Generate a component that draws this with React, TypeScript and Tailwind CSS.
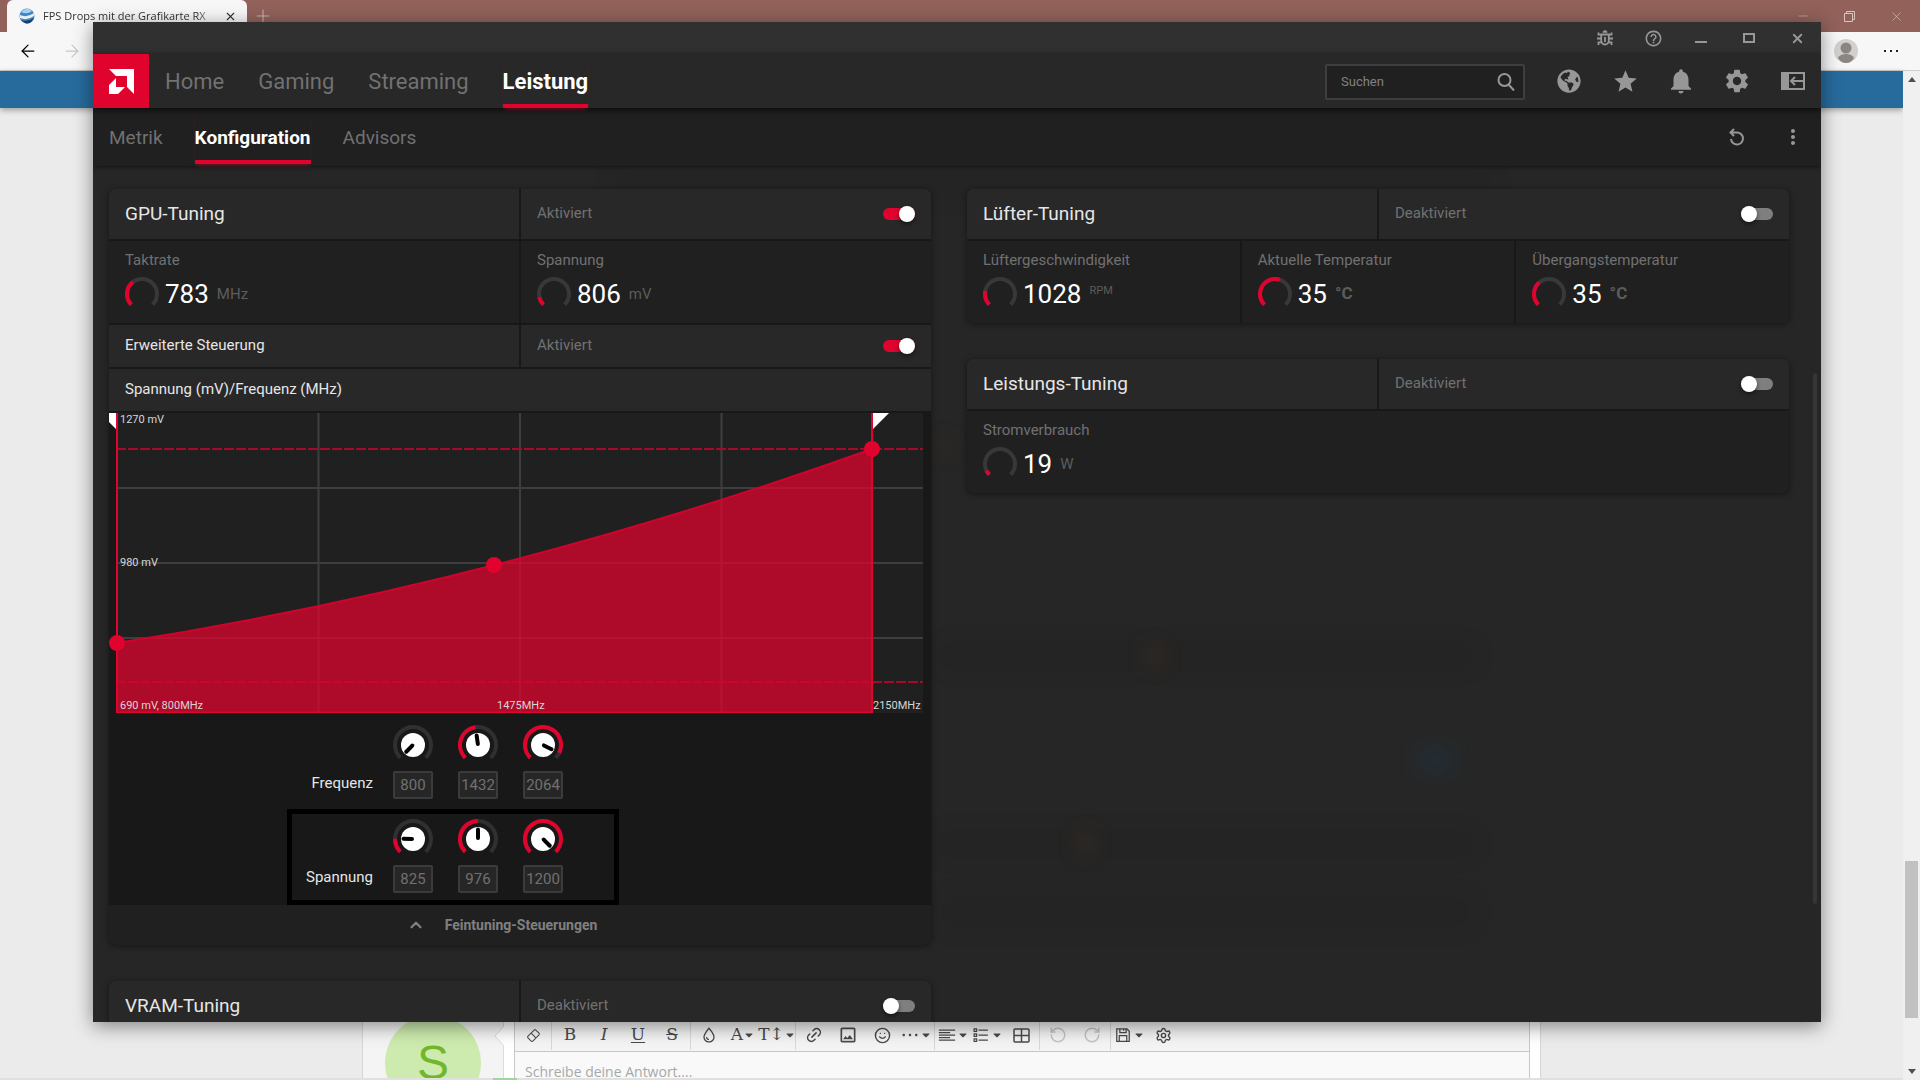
import type { ReactNode } from "react";
import { ArrowLeft, ArrowRight, ChevronUp, Link2, Minus, Plus, RotateCcw, RotateCw, Settings, Smile, X } from "lucide-react";
import { FaCaretDown, FaGlobeAmericas } from "react-icons/fa";
import {
  LiaAlignLeftSolid,
  LiaEllipsisHSolid,
  LiaEraserSolid,
  LiaListUlSolid,
  LiaSaveSolid,
  LiaTintSolid,
} from "react-icons/lia";
import { MdHelpOutline, MdMoreVert, MdNotifications, MdOutlineImage, MdSettings, MdStar } from "react-icons/md";

const RED = "#e0032d";

// 270° arc, starts bottom left. value is 0..1
function arc(cx: number, cy: number, r: number, value: number) {
  const point = (deg: number) => {
    const rad = (deg * Math.PI) / 180;
    return `${cx + r * Math.sin(rad)} ${cy - r * Math.cos(rad)}`;
  };
  const end = -135 + 270 * value;
  return `M${point(-135)}A${r} ${r} 0 ${value * 270 > 180 ? 1 : 0} 1 ${point(end)}`;
}

function Gauge({ value }: { value: number }) {
  return (
    <svg width="34" height="34" viewBox="0 0 34 34" fill="none" strokeWidth="4" aria-hidden="true">
      <path d={arc(17, 17, 15, 1)} stroke="#383838" />
      <path d={arc(17, 17, 15, value)} stroke={RED} />
    </svg>
  );
}

function Knob({ value }: { value: number }) {
  return (
    <svg width="40" height="40" viewBox="0 0 40 40" fill="none" aria-hidden="true">
      <path d={arc(20, 20, 18, 1)} stroke="#303030" strokeWidth="4" />
      {value > 0 && <path d={arc(20, 20, 18, value)} stroke={RED} strokeWidth="4" />}
      <circle cx="20" cy="20" r="12" fill="#fff" />
      <path
        d="M20 19V10.500"
        stroke="#000"
        strokeWidth="4"
        strokeLinecap="round"
        transform={`rotate(${-135 + 270 * value} 20 20)`}
      />
    </svg>
  );
}

function Toggle({ id, on = false }: { id: string; on?: boolean }) {
  return (
    <input
      id={id}
      type="checkbox"
      defaultChecked={on}
      className="relative h-3 w-8 shrink-0 appearance-none rounded-full bg-[#7f7f7f] before:absolute before:-top-0.5 before:left-0 before:size-4 before:rounded-full before:bg-white before:shadow-[0_2px_4px_rgba(0,0,0,0.5)] checked:bg-[#e0032d] checked:before:left-4"
    />
  );
}

type HeaderProps = { id: string; title: string; on?: boolean; small?: boolean };

function TuningHeader({ id, title, on = false, small = false }: HeaderProps) {
  return (
    <div className={`grid grid-cols-2 gap-0.5 ${small ? "h-[42px]" : "h-[50px]"}`}>
      <div className="flex items-center bg-[#282828] px-4">
        {small ? (
          <h3 className="pb-0.5 text-[15px] text-[#e6e6e6]">{title}</h3>
        ) : (
          <h2 className="text-[19px] text-[#e6e6e6]">{title}</h2>
        )}
      </div>
      <div className="flex items-center justify-between bg-[#282828] px-4">
        <label htmlFor={id} className="pb-0.5 text-[15px] text-[#717171]">
          {on ? "Aktiviert" : "Deaktiviert"}
        </label>
        <Toggle id={id} on={on} />
      </div>
    </div>
  );
}

type MetricProps = { label: string; value: string; unit: string; level: number };

function Metric({ label, value, unit, level }: MetricProps) {
  return (
    <div className="h-[82px] bg-[#202020] px-4 pt-[7px]">
      <div className="text-[15px] leading-6 text-[#717171]">{label}</div>
      <div className="mt-[5px] flex items-center">
        <Gauge value={level} />
        <span className="ml-1.5 text-[26px] leading-8 text-white">{value}</span>
        {unit === "RPM" && <span className="mb-1.5 ml-2 text-[11px] text-[#5c5c5c]">RPM</span>}
        {unit === "°C" && <span className="ml-2 text-[17px] font-bold text-[#5c5c5c]">°C</span>}
        {unit !== "RPM" && unit !== "°C" && <span className="ml-2 text-[15px] text-[#5c5c5c]">{unit}</span>}
      </div>
    </div>
  );
}

function Card({ children }: { children: ReactNode }) {
  return (
    <section className="flex flex-col gap-0.5 overflow-hidden rounded-md bg-[#181818] shadow-[0_1px_6px_rgba(0,0,0,0.45)]">
      {children}
    </section>
  );
}

function CurveChart() {
  const curve = "M8 230Q385.500 171 763 36";
  return (
    <svg viewBox="0 0 822 300" className="block w-full" role="img" aria-label="Spannung/Frequenz">
      <rect x="7" width="807" height="300" fill="#202020" />
      <g stroke="#3e3e3e" strokeWidth="2">
        <path d="M209.500 0V300M411 0V300M612.500 0V300M8 75H814M8 150H814M8 225H814" />
      </g>
      <g stroke="#a8082a" strokeWidth="2" strokeDasharray="10 2">
        <path d="M7 36H814M7 269H814" />
      </g>
      <path d={`${curve}V300H8Z`} fill={RED} fillOpacity="0.740" />
      <path d="M7 269H763" stroke="#cf042d" strokeWidth="2" strokeDasharray="10 2" />
      <path d={curve} fill="none" stroke="#d0032d" strokeWidth="2" />
      <path d="M8 0V299.500H763V0" fill="none" stroke={RED} strokeWidth="2" />
      <path d="M0 0H7V16L0 9ZM764 0H780L764 16Z" fill="#fff" />
      <circle cx="8" cy="230" r="8" fill={RED} />
      <circle cx="385" cy="152" r="8" fill={RED} />
      <circle cx="763" cy="36" r="8" fill={RED} />
      <g fill="#d6d6d6" fontSize="11">
        <text x="11" y="10">1270 mV</text>
        <text x="11" y="153">980 mV</text>
        <text x="11" y="296">690 mV, 800MHz</text>
        <text x="388" y="296">1475MHz</text>
        <text x="764" y="296">2150MHz</text>
      </g>
    </svg>
  );
}

type KnobRowProps = { label: string; framed?: boolean; points: { value: string; level: number }[] };

function KnobRow({ label, framed = false, points }: KnobRowProps) {
  return (
    <div
      className={`ml-[178px] flex h-24 w-[332px] items-end gap-5 border-[5px] ${
        framed ? "border-black pb-[7px]" : "border-transparent pb-[5px]"
      }`}
    >
      <span className="w-[81px] pb-1 text-right text-[15px] leading-6 text-[#e6e6e6]">{label}</span>
      <div className="flex gap-[25px]">
        {points.map((p) => (
          <div key={p.value} className="flex flex-col gap-1.5">
            <Knob value={p.level} />
            <input
              aria-label={`${label} ${p.value}`}
              defaultValue={p.value}
              className="h-7 w-10 rounded-xs border-2 border-[#3b3b3b] bg-[#262626] text-center text-[15px] text-[#717171]"
            />
          </div>
        ))}
      </div>
    </div>
  );
}

function BugIcon() {
  return (
    <svg width="16" height="16" viewBox="0 0 16 16" fill="none" stroke="currentColor" strokeWidth="1.800" aria-hidden="true">
      <path d="M5.500 2.800a2.500 2.500 0 0 1 5 0z" fill="currentColor" stroke="none" />
      <path d="M4.200 4.500h7.600v6a3.800 4 0 0 1-7.600 0zM8 7v5M0 8.500h4M12 8.500h4M1.500 2.500v2.200h3M14.500 2.500v2.200h-3M1.500 15v-2.700h3M14.500 15v-2.700h-3" />
    </svg>
  );
}

function SearchIcon() {
  return (
    <svg width="18" height="18" viewBox="0 0 18 18" fill="none" stroke="currentColor" strokeWidth="2" aria-hidden="true">
      <circle cx="7.500" cy="7" r="6" />
      <path d="M11.500 11.500L17 17.500" />
    </svg>
  );
}

function PanelIcon() {
  return (
    <svg width="24" height="18" viewBox="0 0 24 18" fill="none" stroke="currentColor" strokeWidth="2" aria-hidden="true">
      <path d="M1 1h22v16H1z" />
      <path d="M0 0h8v18H0z" fill="currentColor" stroke="none" />
      <path d="M23 9H10M14 5l-4 4 4 4" />
    </svg>
  );
}

function ResetIcon() {
  return (
    <svg width="16" height="18" viewBox="0 0 16 18" fill="none" stroke="currentColor" strokeWidth="2" aria-hidden="true">
      <path d="M5 1L1.500 4.500 5 8M1.500 4.500H8a6 6 0 1 1-6 6.500" />
    </svg>
  );
}

function RestoreIcon() {
  return (
    <svg width="11" height="11" viewBox="0 0 11 11" fill="none" stroke="currentColor" aria-hidden="true">
      <path d="M0.500 2.500h8v8h-8zM2.500 2.500v-2h8v8h-2" />
    </svg>
  );
}

function TableIcon() {
  return (
    <svg width="17" height="15" viewBox="0 0 17 15" fill="none" stroke="currentColor" strokeWidth="1.500" aria-hidden="true">
      <rect x="1" y="1" width="15" height="13" rx="1" />
      <path d="M8.500 1V14M1 7.500H16" />
    </svg>
  );
}

const mainTabs = ["Home", "Gaming", "Streaming", "Leistung"];
const subTabs = ["Metrik", "Konfiguration", "Advisors"];

const titleActions = [
  { label: "Fehler melden", icon: <BugIcon /> },
  { label: "Hilfe", icon: <MdHelpOutline size={19} /> },
  { label: "Minimieren", icon: <span className="mt-2 h-0.5 w-3 bg-current" /> },
  { label: "Maximieren", icon: <span className="h-2.5 w-3 border-2 border-current" /> },
  { label: "Schließen", icon: <X size={15} strokeWidth={3} /> },
];

const navActions = [
  { label: "Web", icon: <FaGlobeAmericas size={24} /> },
  { label: "Favoriten", icon: <MdStar size={27} /> },
  { label: "Benachrichtigungen", icon: <MdNotifications size={30} /> },
  { label: "Einstellungen", icon: <MdSettings size={28} /> },
  { label: "Seitenleiste", icon: <PanelIcon /> },
];

const ghosts = [
  "left-[520px] top-[10px] h-4 w-[880px] bg-black/10",
  "left-[842px] top-[482px] h-4 w-[540px] bg-black/10",
  "left-[842px] top-[670px] h-4 w-[540px] bg-black/10",
  "left-[842px] top-[730px] h-8 w-[540px] bg-black/5",
  "left-[1052px] top-[480px] size-5 bg-amber-600/10",
  "left-[982px] top-[667px] size-5 bg-amber-600/10",
  "left-[842px] top-[270px] size-5 bg-amber-600/5",
  "left-[1326px] top-[584px] h-5 w-8 bg-sky-600/15",
];

function RadeonWindow() {
  return (
    <div className="absolute top-[22px] right-[99px] bottom-[58px] left-[93px] flex flex-col overflow-hidden bg-[#262626] font-[Roboto,sans-serif] text-[#979797]">
      <header className="flex h-8 shrink-0 justify-end bg-[#303030]">
        {titleActions.map((a) => (
          <button key={a.label} aria-label={a.label} className="flex w-12 items-center justify-center">
            {a.icon}
          </button>
        ))}
      </header>

      <nav className="z-10 flex h-[54px] shrink-0 items-stretch bg-[#282828] shadow-[0_2px_6px_rgba(0,0,0,0.7)]">
        <a href="#home" aria-label="AMD" className="flex w-14 items-center justify-center bg-[#e0032d]">
          <svg width="25" height="25" viewBox="0 0 25 25" fill="#fff" aria-hidden="true">
            <path d="M0 0H25V25L18 18V7H7ZM7 9V18H16L9 25H0V16Z" />
          </svg>
        </a>
        <div className="ml-4 flex gap-[34px]">
          {mainTabs.map((tab) => (
            <a
              key={tab}
              href={`#${tab}`}
              className={
                tab === "Leistung"
                  ? "border-b-4 border-[#e0032d] pt-1.5 text-[22px] leading-[44px] font-bold text-white shadow-[0_3px_4px_-2px_rgba(224,3,45,0.5)]"
                  : "pt-1.5 text-[22px] leading-[44px] text-[#717171]"
              }
            >
              {tab}
            </a>
          ))}
        </div>
        <div className="my-2.5 mr-4 ml-auto flex h-9 w-[200px] items-center rounded-xs border-2 border-[#3e3e3e] bg-[#202020] pr-2 pl-3.5 max-xl:w-32">
          <input
            aria-label="Suchen"
            placeholder="Suchen"
            className="min-w-0 flex-1 bg-transparent text-[13px] outline-none placeholder:text-[#808080]"
          />
          <SearchIcon />
        </div>
        {navActions.map((a) => (
          <button key={a.label} aria-label={a.label} className="flex w-14 items-center justify-center">
            {a.icon}
          </button>
        ))}
      </nav>

      <nav className="flex h-[58px] shrink-0 items-stretch bg-[#202020] shadow-[0_1px_4px_rgba(0,0,0,0.5)]">
        <div className="mb-0.5 ml-4 flex gap-8">
          {subTabs.map((tab) => (
            <a
              key={tab}
              href={`#${tab}`}
              className={
                tab === "Konfiguration"
                  ? "border-b-4 border-[#e0032d] pt-1.5 text-[19px] leading-[48px] font-bold text-white shadow-[0_3px_4px_-2px_rgba(224,3,45,0.5)]"
                  : "pt-1.5 text-[19px] leading-[48px] text-[#717171]"
              }
            >
              {tab}
            </a>
          ))}
        </div>
        <button aria-label="Zurücksetzen" className="ml-auto flex w-14 items-center justify-center">
          <ResetIcon />
        </button>
        <button aria-label="Mehr" className="flex w-14 items-center justify-center">
          <MdMoreVert size={24} />
        </button>
      </nav>

      <main className="relative min-h-0 flex-1 overflow-hidden pt-[23px] pr-8 pl-4">
        {ghosts.map((g) => (
          <div key={g} className={`absolute rounded-full blur-md ${g}`} />
        ))}
        <div className="relative grid grid-cols-2 items-start gap-9">
          <div className="flex flex-col gap-9">
            <Card>
              <TuningHeader id="gpu" title="GPU-Tuning" on />
              <div className="grid grid-cols-2 gap-0.5">
                <Metric label="Taktrate" value="783" unit="MHz" level={0.36} />
                <Metric label="Spannung" value="806" unit="mV" level={0.12} />
              </div>
              <TuningHeader id="advanced" title="Erweiterte Steuerung" on small />
              <h3 className="bg-[#282828] px-4 pb-0.5 text-[15px] leading-10 text-[#e6e6e6]">
                Spannung (mV)/Frequenz (MHz)
              </h3>
              <div>
                <CurveChart />
                <KnobRow
                  label="Frequenz"
                  points={[
                    { value: "800", level: 0 },
                    { value: "1432", level: 0.47 },
                    { value: "2064", level: 0.93 },
                  ]}
                />
                <KnobRow
                  label="Spannung"
                  framed
                  points={[
                    { value: "825", level: 0.17 },
                    { value: "976", level: 0.5 },
                    { value: "1200", level: 1 },
                  ]}
                />
                <button className="flex h-10 w-full items-center justify-center gap-5 bg-[#202020] pr-9 text-[14px] font-bold text-[#808080]">
                  <ChevronUp size={18} strokeWidth={3} />
                  Feintuning-Steuerungen
                </button>
              </div>
            </Card>
            <Card>
              <TuningHeader id="vram" title="VRAM-Tuning" />
            </Card>
          </div>

          <div className="flex flex-col gap-9">
            <Card>
              <TuningHeader id="fan" title="Lüfter-Tuning" />
              <div className="grid grid-cols-3 gap-0.5">
                <Metric label="Lüftergeschwindigkeit" value="1028" unit="RPM" level={0.21} />
                <Metric label="Aktuelle Temperatur" value="35" unit="°C" level={0.57} />
                <Metric label="Übergangstemperatur" value="35" unit="°C" level={0.35} />
              </div>
            </Card>
            <Card>
              <TuningHeader id="power" title="Leistungs-Tuning" />
              <Metric label="Stromverbrauch" value="19" unit="W" level={0.07} />
            </Card>
          </div>
        </div>
        {/* Scroll thumb */}
        <div className="absolute top-[207px] right-1 h-[531px] w-1 rounded-full bg-[#363636]" />
      </main>
    </div>
  );
}

type Tool = { label: string; icon: ReactNode; caret?: boolean; muted?: boolean };

const toolGroups: Tool[][] = [
  [{ label: "Formatierung entfernen", icon: <LiaEraserSolid /> }],
  [
    { label: "Fett", icon: "B" },
    { label: "Kursiv", icon: <span className="italic">I</span> },
    { label: "Unterstrichen", icon: <span className="underline underline-offset-2">U</span> },
    { label: "Durchgestrichen", icon: <span className="line-through">S</span> },
  ],
  [
    { label: "Textfarbe", icon: <LiaTintSolid size={20} /> },
    { label: "Schriftart", icon: "A", caret: true },
    { label: "Schriftgröße", icon: "T↕", caret: true },
  ],
  [
    { label: "Link", icon: <Link2 size={18} className="-rotate-45" /> },
    { label: "Bild", icon: <MdOutlineImage size={20} /> },
    { label: "Smileys", icon: <Smile size={17} /> },
    { label: "Einfügen", icon: <LiaEllipsisHSolid size={20} />, caret: true },
  ],
  [
    { label: "Ausrichtung", icon: <LiaAlignLeftSolid size={20} />, caret: true },
    { label: "Liste", icon: <LiaListUlSolid size={20} />, caret: true },
    { label: "Tabelle", icon: <TableIcon /> },
  ],
  [
    { label: "Rückgängig", icon: <RotateCcw size={18} />, muted: true },
    { label: "Wiederholen", icon: <RotateCw size={18} />, muted: true },
  ],
  [
    { label: "Entwürfe", icon: <LiaSaveSolid size={20} />, caret: true },
    { label: "BB-Code", icon: <Settings size={17} /> },
  ],
];

function ReplyForm() {
  return (
    <section className="mt-auto mr-[362px] ml-[362px] flex h-[76px] border-x border-[#d6d6d6] bg-white">
      <div className="w-[141px] shrink-0 overflow-hidden border-r border-[#dcdcdc] bg-[#f4f4f4] pt-[13px]">
        <div className="mx-auto size-24 rounded-full bg-[#cdebae] text-center font-['Liberation_Sans',sans-serif] text-[48px] leading-[96px] text-[#72b72b]">
          S
        </div>
      </div>
      <svg width="10" height="20" viewBox="0 0 10 20" className="mt-6 -ml-2.5 shrink-0" aria-hidden="true">
        <path d="M10 0L1 10L10 20" fill="#fff" stroke="#dcdcdc" />
      </svg>
      <div className="mr-2.5 ml-2.5 flex min-w-0 flex-1 flex-col overflow-hidden border-x border-[#c8c8c8] bg-[#f9f9f9]">
        <div className="flex h-[50px] shrink-0 items-end border-b border-[#c8c8c8] bg-[#f4f4f4] text-[#4a4a4a]">
          {toolGroups.map((group) => (
            <div key={group[0].label} className="mb-px flex h-[30px] border-r border-[#d8d8d8] px-px last:border-0">
              {group.map((tool) => (
                <button
                  key={tool.label}
                  aria-label={tool.label}
                  className={`flex w-[34px] shrink-0 items-center justify-center font-['DejaVu_Serif',serif] text-[17px] ${
                    tool.muted ? "text-[#c4c4c4]" : ""
                  }`}
                >
                  {tool.icon}
                  {tool.caret && <FaCaretDown size={12} className="shrink-0" />}
                </button>
              ))}
            </div>
          ))}
        </div>
        <textarea
          aria-label="Antwort"
          placeholder="Schreibe deine Antwort...."
          className="block resize-none bg-transparent px-2.5 pt-2 text-sm leading-6 outline-none placeholder:text-[#a8a8a8]"
        />
      </div>
    </section>
  );
}

export default function App() {
  return (
    <div className="relative flex h-screen flex-col overflow-hidden bg-[#ebebeb] font-['Open_Sans',sans-serif]">
      {/* Browser tabs */}
      <div className="flex h-8 shrink-0 items-center bg-[#91615a] pl-[7px] text-[#d9c5c2]">
        <div className="flex h-8 w-60 items-center rounded-t-md bg-[#f7f7f7] pr-2.5 pl-3 text-[#333]">
          <svg width="16" height="16" viewBox="0 0 16 16" aria-hidden="true">
            <circle cx="8" cy="8" r="7.500" fill="#3f86c4" />
            <path d="M2 4Q8-2 13 3Q8 7 2 4Z" fill="#a9cfeb" />
            <path d="M1 7Q8 10 15 5V8Q8 13 1 10Z" fill="#e8eef2" />
            <path d="M2 12Q9 14 15 10Q12 16 7 15.500Z" fill="#173f6b" />
          </svg>
          <span className="ml-2 w-[172px] overflow-hidden text-[11px] whitespace-nowrap mask-r-from-90%">
            FPS Drops mit der Grafikarte RX
          </span>
          <button aria-label="Tab schließen" className="ml-auto">
            <X size={13} strokeWidth={2} />
          </button>
        </div>
        <button aria-label="Neuer Tab" className="ml-1.5">
          <Plus size={20} strokeWidth={1} />
        </button>
        <div className="ml-auto flex items-center gap-[34px] pr-4">
          <Minus size={14} strokeWidth={1} />
          <RestoreIcon />
          <X size={15} strokeWidth={1} />
        </div>
      </div>
      <div className="flex h-[39px] shrink-0 items-center border-b border-[#cfcfcf] bg-[#f7f7f7] px-[18px]">
        <button aria-label="Zurück">
          <ArrowLeft size={20} strokeWidth={1.5} />
        </button>
        <button aria-label="Vorwärts" className="ml-6 text-[#c8c8c8]">
          <ArrowRight size={20} strokeWidth={1.5} />
        </button>
        <svg width="24" height="24" viewBox="0 0 24 24" className="ml-auto" aria-hidden="true">
          <circle cx="12" cy="12" r="12" fill="#d2d0cc" />
          <circle cx="12" cy="9" r="5.500" fill="#8a8683" />
          <path d="M4 19Q6 15 12 15T20 19Q17 24 12 24T4 19Z" fill="#8a8683" />
        </svg>
        <button aria-label="Einstellungen und mehr" className="ml-[26px] flex gap-1">
          <span className="size-0.5 bg-[#222]" />
          <span className="size-0.5 bg-[#222]" />
          <span className="size-0.5 bg-[#222]" />
        </button>
        <span className="w-1" />
      </div>

      <div className="flex min-h-0 flex-1">
        <div className="flex min-w-0 flex-1 flex-col">
          <div className="h-[37px] shrink-0 bg-[#276b9c] shadow-[0_2px_6px_rgba(0,0,0,0.35)]" />
          <ReplyForm />
          <div className="flex h-0.5 shrink-0 bg-[#e0e0e0] pl-[493px]">
            <div className="w-6 bg-[#a3d3a0]" />
          </div>
        </div>
        {/* Page scrollbar */}
        <div className="flex w-[17px] shrink-0 flex-col items-center bg-[#f0f0f0] py-1.5">
          <svg width="8" height="5" viewBox="0 0 8 5" aria-hidden="true">
            <path d="M0 5L4 0L8 5Z" fill="#505050" />
          </svg>
          <div className="mt-auto mb-[51px] h-[157px] w-[13px] bg-[#c1c1c1]" />
          <svg width="8" height="5" viewBox="0 0 8 5" aria-hidden="true">
            <path d="M0 0H8L4 5Z" fill="#505050" />
          </svg>
        </div>
      </div>

      {/* the shadow sits outside the clipped window */}
      <div className="absolute top-[22px] right-[99px] bottom-[58px] left-[93px] shadow-[0_4px_18px_rgba(0,0,0,0.45)]" />
      <RadeonWindow />
    </div>
  );
}
